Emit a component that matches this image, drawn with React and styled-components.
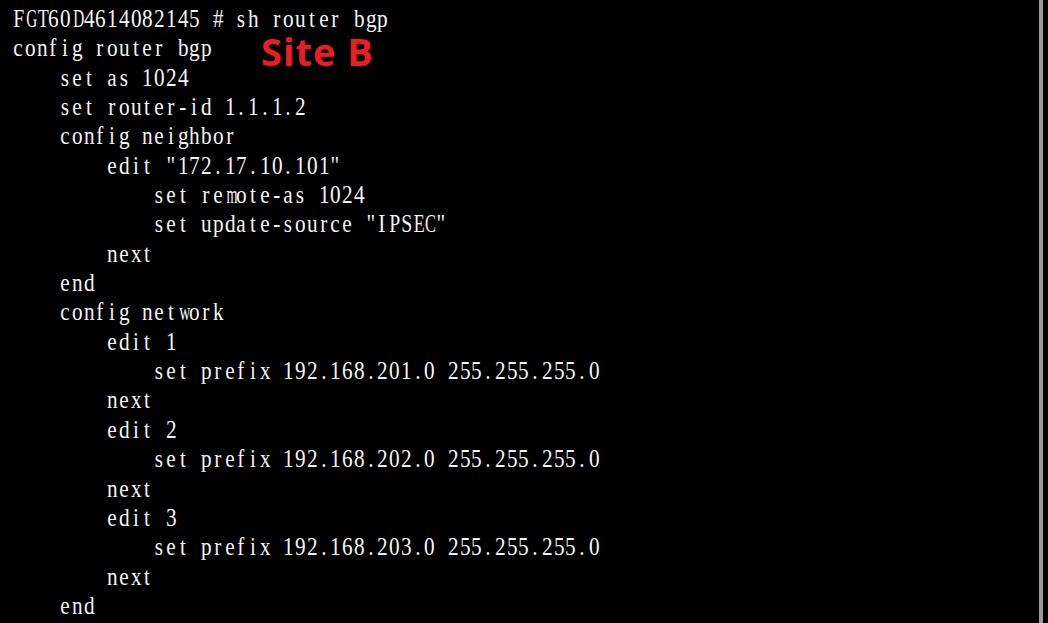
import React from "react";
import styled, { createGlobalStyle } from "styled-components";

const Global = createGlobalStyle`
  html, body { margin: 0; padding: 0; background: #000; }
  body { width: 1048px; height: 623px; overflow: hidden; }
`;

const Screen = styled.div`
  position: relative;
  width: 1048px;
  height: 623px;
  background: #000;
  display: flex;
  overflow: hidden;
`;

const Terminal = styled.div`
  flex: 0 0 1043px;
  box-sizing: border-box;
  padding: 4px 0 0 12px;
  border-right: 4px solid #9a9a9a;
  display: flex;
  flex-direction: column;
  font-family: "Liberation Serif", "Times New Roman", serif;
  font-size: 25px;
  line-height: 29.35px;
  color: #f4f4f4;
`;

const Line = styled.div`
  display: flex;
  height: 29.35px;
  padding-left: ${(p) => p.$indent * 47}px;
  white-space: pre;
`;

const Cell = styled.span`
  display: inline-block;
  flex: 0 0 11.75px;
  width: 11.75px;
  text-align: center;
  transform: scaleX(${(p) => p.$scale});
`;

const Label = styled.div`
  position: absolute;
  left: 261px;
  top: 32px;
  font-family: "Open Sans", "Liberation Sans", sans-serif;
  font-weight: 700;
  font-size: 38px;
  line-height: 38px;
  letter-spacing: 1px;
  color: #ea1d25;
`;

const WIDTHS = {
  m: 0.778, w: 0.722, M: 0.889, W: 0.944, G: 0.722, D: 0.722, T: 0.611,
  F: 0.556, S: 0.556, E: 0.611, C: 0.667, P: 0.556, I: 0.333, B: 0.667,
};

const scaleOf = (ch) => {
  const w = WIDTHS[ch];
  if (!w) return 0.85;
  return Math.min(0.85, 11 / (w * 25));
};

const LINES = [
  [0, "FGT60D4614082145 # sh router bgp"],
  [0, "config router bgp"],
  [1, "set as 1024"],
  [1, "set router-id 1.1.1.2"],
  [1, "config neighbor"],
  [2, 'edit "172.17.10.101"'],
  [3, "set remote-as 1024"],
  [3, 'set update-source "IPSEC"'],
  [2, "next"],
  [1, "end"],
  [1, "config network"],
  [2, "edit 1"],
  [3, "set prefix 192.168.201.0 255.255.255.0"],
  [2, "next"],
  [2, "edit 2"],
  [3, "set prefix 192.168.202.0 255.255.255.0"],
  [2, "next"],
  [2, "edit 3"],
  [3, "set prefix 192.168.203.0 255.255.255.0"],
  [2, "next"],
  [1, "end"],
];

export default function App() {
  return (
    <>
      <Global />
      <Screen>
        <Terminal>
          {LINES.map(([indent, text], i) => (
            <Line key={i} $indent={indent}>
              {[...text].map((ch, j) => (
                <Cell key={j} $scale={scaleOf(ch)}>
                  {ch}
                </Cell>
              ))}
            </Line>
          ))}
        </Terminal>
        <Label>Site B</Label>
      </Screen>
    </>
  );
}
